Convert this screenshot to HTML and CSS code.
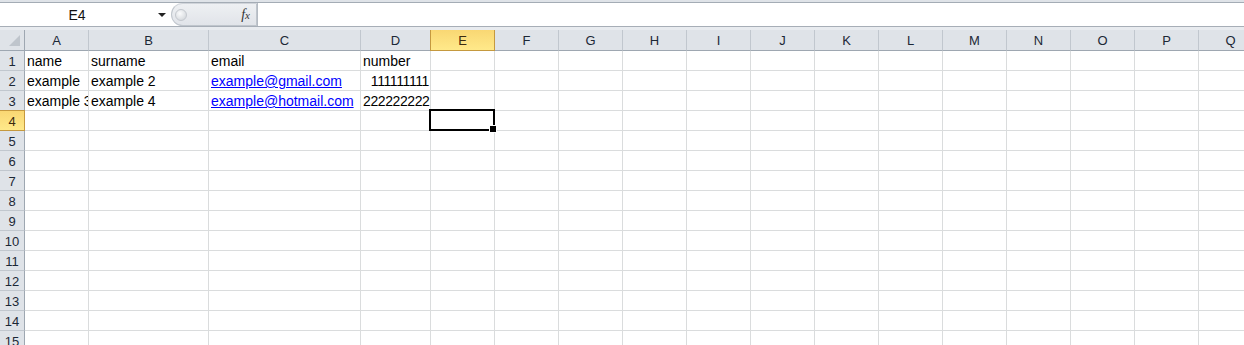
FILE: index.html
```html
<!DOCTYPE html>
<html lang="en">
<head>
  <meta charset="UTF-8" />
  <title>Sheet1</title>
  <link rel="stylesheet" href="styles.css">
</head>
<body>

  <div class="ribbon-edge"></div>

  <div class="formula-bar">
    <div class="name-box">
      <span class="ref">E4</span>
      <span class="arrow"></span>
    </div>
    <div class="fx-box">
      <span class="knob"></span>
      <span class="fx"><i>f</i><i class="fx-x">x</i></span>
    </div>
    <div class="formula-input"></div>
  </div>

  <div class="bar-gap"></div>

  <div class="sheet" id="sheet">
    <!-- cells are built below -->
  </div>

  <script>
    const cols = 'ABCDEFGHIJKLMNOPQ'.split('');
    const rows = 15;
    const active = { col: 'E', row: 4 };

    const data = {
      1: ['name', 'surname', 'email', 'number'],
      2: ['example', 'example 2', { link: 'example@gmail.com' }, { num: '111111111' }],
      3: ['example 3', 'example 4', { link: 'example@hotmail.com' }, { num: '222222222' }]
    };

    const sheet = document.getElementById('sheet');

    function add(cls, html) {
      const div = document.createElement('div');
      div.className = cls;
      if (html) div.innerHTML = html;
      sheet.appendChild(div);
      return div;
    }

    add('corner');
    cols.forEach(c => {
      add('col-head' + (c === active.col ? ' sel-head' : ''), c);
    });

    for (let r = 1; r <= rows; r++) {
      add('row-head' + (r === active.row ? ' sel-head' : ''), r);
      const values = data[r] || [];
      cols.forEach((c, i) => {
        const v = values[i];
        let cls = 'cell';
        let html = '';
        if (typeof v === 'string') {
          html = v;
        } else if (v && v.link) {
          html = `<a href="mailto:${v.link}">${v.link}</a>`;
        } else if (v && v.num) {
          cls += ' num';
          html = v.num;
        }
        if (c === active.col && r === active.row) cls += ' active';
        add(cls, html);
      });
    }
  </script>

</body>
</html>
```

FILE: styles.css
```css
* { box-sizing: border-box; }
body {
  margin: 0;
  background: #fff;
  font-family: 'Liberation Sans', Arial, sans-serif;
  overflow: hidden;
}

.ribbon-edge {
  height: 3px;
  background: #dfe3e8;
  border-bottom: 1px solid #a4acb5;
}

.formula-bar {
  display: flex;
  height: 24px;
  background: #fff;
  border-bottom: 1px solid #a7aeb7;
}
.name-box {
  width: 171px;
  display: flex;
  align-items: center;
  position: relative;
}
.name-box .ref {
  flex: 1;
  text-align: center;
  font-size: 14px;
  color: #111;
  padding-right: 4px;
  padding-top: 1px;
}
.name-box .arrow {
  width: 0;
  height: 0;
  margin-right: 5px;
  border-left: 4px solid transparent;
  border-right: 4px solid transparent;
  border-top: 4px solid #222;
}
.fx-box {
  width: 86px;
  display: flex;
  align-items: center;
  justify-content: space-between;
  background: linear-gradient(#eef0f3, #e1e4e9);
  border: 1px solid #bfc5cc;
  border-top-color: #d0d4da;
  border-radius: 12px 0 0 12px;
  padding: 0 6px 0 3px;
}
.knob {
  width: 12px;
  height: 12px;
  border-radius: 50%;
  background: radial-gradient(circle at 40% 35%, #fafbfc, #cdd1d6);
  border: 1px solid #c4c8ce;
}
.fx {
  font-family: 'Liberation Serif', 'Times New Roman', serif;
  font-size: 14px;
  color: #333;
}
.fx i { font-style: italic; }
.fx .fx-x { font-size: 11px; }
.formula-input {
  flex: 1;
  border-left: 1px solid #b5bbc3;
}

.bar-gap {
  height: 3px;
  background: #e8ebef;
}

.sheet {
  display: grid;
  grid-template-columns: 25px 64px 120px 152px 70px repeat(13, 64px);
  grid-template-rows: 21px;
  grid-auto-rows: 20px;
  width: 1263px;
}

.corner,
.col-head,
.row-head {
  background: #dfe3e8;
  color: #1c2836;
  font-size: 13px;
  line-height: 19px;
  text-align: center;
}
.corner {
  position: relative;
  border-right: 1px solid #9ea7b1;
  border-bottom: 1px solid #9ea7b1;
}
.corner::after {
  content: '';
  position: absolute;
  right: 4px;
  bottom: 4px;
  width: 11px;
  height: 11px;
  background: #bfc5cc;
  clip-path: polygon(100% 0, 100% 100%, 0 100%);
}
.col-head {
  padding-top: 1px;
  border-right: 1px solid #c1c7ce;
  border-bottom: 1px solid #9ea7b1;
}
.row-head {
  padding-top: 1px;
  border-right: 1px solid #9ea7b1;
  border-bottom: 1px solid #c1c7ce;
}
.sel-head {
  background: linear-gradient(#f9d773, #ffe98a);
  color: #3b2a10;
  border-color: #c5993f;
}
.col-head.sel-head {
  border-left: 1px solid #c5993f;
  margin-left: -1px;
}
.row-head.sel-head {
  border-top: 1px solid #c5993f;
  margin-top: -1px;
}

.cell {
  position: relative;
  font-size: 14px;
  line-height: 19px;
  color: #000;
  padding: 1px 2px 0 2px;
  white-space: nowrap;
  overflow: hidden;
  border-right: 1px solid #dadcdd;
  border-bottom: 1px solid #dadcdd;
}
.cell a {
  color: #0000ff;
  text-decoration: underline;
}
.cell.num {
  text-align: right;
  letter-spacing: -0.4px;
  padding-right: 1px;
}
.cell.active {
  overflow: visible;
}
.cell.active::before {
  content: '';
  position: absolute;
  left: -2px;
  top: -2px;
  right: -1px;
  bottom: -1px;
  border: 2px solid #000;
  z-index: 2;
}
.cell.active::after {
  content: '';
  position: absolute;
  right: -3px;
  bottom: -3px;
  width: 6px;
  height: 6px;
  background: #000;
  border: 1px solid #fff;
  z-index: 3;
}
```
